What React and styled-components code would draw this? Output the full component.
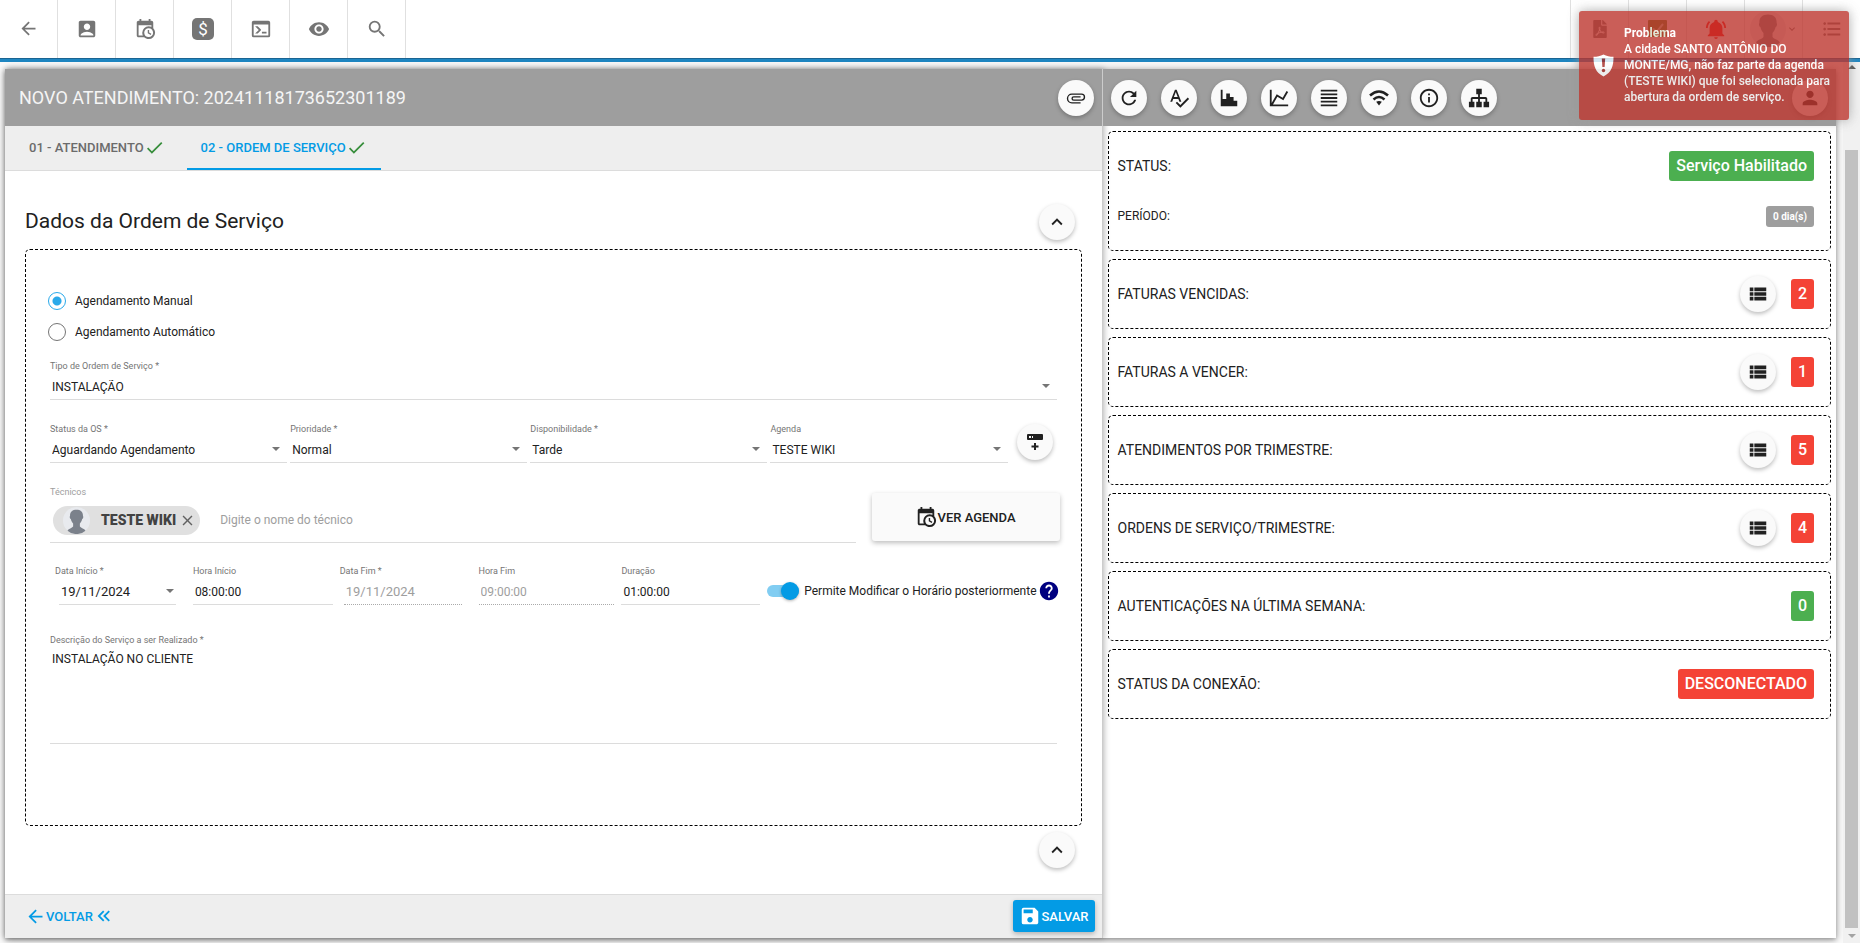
import React, { useState } from "react";
import styled, { createGlobalStyle } from "styled-components";
import {
  MdAccountBox,
  MdArrowBack,
  MdCheck,
  MdClose,
  MdFormatListBulleted,
  MdHelp,
  MdInfoOutline,
  MdKeyboardArrowDown,
  MdKeyboardArrowUp,
  MdPerson,
  MdRefresh,
  MdSave,
  MdSearch,
  MdSpellcheck,
  MdViewList,
  MdVisibility,
} from "react-icons/md";
import { FaFilePdf } from "react-icons/fa";

const GlobalStyle = createGlobalStyle`
  * {
    box-sizing: border-box;
  }
  body {
    margin: 0;
    background: #fafafa;
    color: #212121;
    font-family: Roboto, "Liberation Sans", sans-serif;
    font-size: 14px;
  }
  button, input, select, textarea {
    font-family: inherit;
    color: inherit;
  }
  button {
    border: none;
    padding: 0;
    cursor: pointer;
  }
  svg {
    display: block;
    flex: none;
  }
`;

const Page = styled.div`
  display: flex;
  flex-direction: column;
  height: 100vh;
  min-height: 900px;
`;

const Topbar = styled.header`
  display: flex;
  justify-content: space-between;
  height: 62px;
  flex: none;
  background: #fff;
  border-bottom: 3px solid #1f86c1;
  box-shadow: inset 0 -1px 0 #1b6492;
`;

const TopGroup = styled.nav`
  display: flex;
`;

const TopButton = styled.button`
  display: flex;
  align-items: center;
  justify-content: center;
  width: 58px;
  height: 58px;
  padding-bottom: 1px;
  background: none;
  color: ${({ $color }) => $color || "#757575"};
  border-right: ${({ $end }) => ($end ? "none" : "1px solid #e0e0e0")};
  border-left: ${({ $end }) => ($end ? "1px solid #e0e0e0" : "none")};
`;

const Body = styled.div`
  display: flex;
  flex: 1;
  min-height: 0;
`;

const Workspace = styled.main`
  display: flex;
  flex: 1;
  min-width: 0;
  margin: 7px 7px 5px 5px;
  background: #fff;
  box-shadow: 0 1px 8px rgba(0, 0, 0, 0.35), 0 2px 4px rgba(0, 0, 0, 0.2);
`;

const FormPanel = styled.section`
  display: flex;
  flex-direction: column;
  flex: 299 1 0;
  min-width: 0;
  border-right: 1px solid #ccc;
  box-shadow: 1px 0 6px rgba(0, 0, 0, 0.3);
`;

const SidePanel = styled.aside`
  flex: 200 1 0;
  min-width: 0;
`;

const PanelHeader = styled.div`
  display: flex;
  align-items: center;
  gap: 14px;
  height: 57px;
  padding: 0 8px;
  background: #9e9e9e;
`;

const Title = styled.h1`
  flex: 1;
  margin: 0;
  padding-left: 6px;
  font-size: 18px;
  font-weight: 400;
  color: #f5f5f5;
`;

const Spacer = styled.span`
  flex: 1;
`;

const RoundButton = styled.button`
  display: flex;
  align-items: center;
  justify-content: center;
  flex: none;
  width: 36px;
  height: 36px;
  border-radius: 50%;
  background: #fafafa;
  color: #212121;
  box-shadow: 0 2px 4px rgba(0, 0, 0, 0.26);
`;

const Tabs = styled.nav`
  display: flex;
  gap: 8px;
  height: 45px;
  padding: 0 10px;
  background: #eee;
  border-bottom: 1px solid #dcdcdc;
`;

const Tab = styled.button`
  display: flex;
  align-items: center;
  padding: 0 14px;
  background: none;
  font-size: 13px;
  font-weight: 500;
  color: ${({ $active }) => ($active ? "#039be5" : "#6b6b6b")};
  border-bottom: 2px solid ${({ $active }) => ($active ? "#039be5" : "transparent")};

  svg {
    color: #388e3c;
  }
`;

const Content = styled.div`
  flex: 1;
  min-height: 0;
  padding: 33px 20px 0;
`;

const SectionHead = styled.div`
  display: flex;
  align-items: center;
  justify-content: space-between;
  height: 36px;
  padding-right: 7px;
  margin-bottom: 9px;
`;

const SectionTitle = styled.h2`
  margin: 0;
  padding-bottom: 2px;
  font-size: 21px;
  font-weight: 400;
`;

const SectionFoot = styled.div`
  display: flex;
  justify-content: flex-end;
  padding: 6px 7px 0 0;
`;

const FormBox = styled.form`
  border: 1px dashed #000;
  border-radius: 5px;
  padding: 35px 24px 81px;
`;

const RadioLabel = styled.label`
  display: flex;
  align-items: center;
  gap: 9px;
  height: 31px;
  font-size: 12px;
`;

const Radio = styled.input`
  appearance: none;
  width: 18px;
  height: 18px;
  margin: 0 0 0 -2px;
  border: 1px solid #757575;
  border-radius: 50%;

  &:checked {
    border-color: #29a9ea;
    background: radial-gradient(circle, #29a9ea 4px, #fff 5px);
  }
`;

const Row = styled.div`
  display: flex;
  align-items: ${({ $align }) => $align || "flex-start"};
  gap: ${({ $gap }) => $gap || 0}px;
  margin-top: ${({ $top }) => $top || 0}px;
`;

const FieldWrap = styled.div`
  position: relative;
  flex: 1;
  min-width: 0;
`;

const DateCell = styled(FieldWrap)`
  padding-right: 7px;
`;

const FieldLabel = styled.label`
  display: block;
  height: 12px;
  line-height: 12px;
  font-size: 9px;
  color: ${({ $light }) => ($light ? "#9e9e9e" : "#757575")};
  white-space: nowrap;
`;

const Select = styled.select`
  appearance: none;
  display: block;
  width: 100%;
  height: 28px;
  padding: 2px 24px 0 2px;
  border: none;
  border-bottom: 1px solid #dcdcdc;
  border-radius: 0;
  background: transparent;
  font-size: 12px;
`;

const TextInput = styled.input`
  display: block;
  width: 100%;
  height: 28px;
  padding: 2px 2px 0;
  border: none;
  border-bottom: 1px solid #dcdcdc;
  background: transparent;
  font-size: 12px;

  &:disabled {
    color: #9e9e9e;
    border-bottom: 1px dotted #aaa;
  }
`;

const DateInput = styled(TextInput)`
  width: calc(100% - 14px);
  margin-left: 4px;
  font-size: 13px;
`;

const Caret = styled.span`
  position: absolute;
  right: ${({ $right }) => $right || 7}px;
  bottom: 12px;
  border: 4px solid transparent;
  border-top-color: #757575;
  border-bottom: none;
  pointer-events: none;
`;

const Textarea = styled.textarea`
  display: block;
  width: 100%;
  height: 98px;
  padding: 6px 2px;
  border: none;
  border-bottom: 1px solid #dcdcdc;
  background: transparent;
  font-size: 12px;
  resize: none;
`;

const AddWrap = styled.div`
  padding: 1px 4px 0 6px;
`;

const Technicians = styled.div`
  flex: 1;
  border-bottom: 1px solid #dcdcdc;
`;

const ChipLine = styled.div`
  display: flex;
  align-items: center;
  gap: 20px;
  height: 44px;
  padding-left: 3px;
`;

const Chip = styled.span`
  display: flex;
  align-items: center;
  height: 29px;
  padding: 0 4px 0 10px;
  border-radius: 15px;
  background: #e0e0e0;
  color: #424242;
  font-size: 14px;
  font-weight: 700;

  strong {
    margin: 0 3px 0 11px;
  }
`;

const ChipRemove = styled.button`
  background: none;
  color: #616161;
`;

const ChipInput = styled.input`
  flex: 1;
  border: none;
  padding: 0;
  background: none;
  font-size: 12px;

  &::placeholder {
    color: #9e9e9e;
  }
`;

const AgendaButton = styled.button`
  display: flex;
  align-items: center;
  justify-content: center;
  width: 188px;
  height: 48px;
  margin: 0 -3px 2px 0;
  border-radius: 3px;
  background: #fafafa;
  font-size: 13px;
  font-weight: 500;
  box-shadow: 0 2px 5px rgba(0, 0, 0, 0.26);
`;

const DateRow = styled.div`
  display: grid;
  grid-template-columns: 139fr 148fr 140fr 144fr 147fr auto;
  margin: 22px 0 0 5px;
`;

const SwitchLabel = styled.label`
  display: flex;
  align-items: center;
  gap: 5px;
  padding-top: 12px;
  margin-right: -3px;
  font-size: 12px;
  white-space: nowrap;

  svg {
    margin-left: -4px;
  }
`;

const Switch = styled.input`
  appearance: none;
  position: relative;
  width: 32px;
  height: 12px;
  margin: 0;
  border-radius: 6px;
  background: #81cdf2;

  &::after {
    content: "";
    position: absolute;
    top: -3px;
    right: 0;
    width: 18px;
    height: 18px;
    border-radius: 50%;
    background: #039be5;
    box-shadow: 0 1px 3px rgba(0, 0, 0, 0.3);
  }
`;

const Footer = styled.footer`
  display: flex;
  align-items: center;
  justify-content: space-between;
  height: 44px;
  padding: 0 7px 1px 20px;
  background: #eee;
  border-top: 1px solid #dcdcdc;
`;

const BackButton = styled.button`
  display: flex;
  align-items: center;
  background: none;
  color: #039be5;
  font-size: 13px;
  font-weight: 500;
`;

const SaveButton = styled(BackButton)`
  height: 32px;
  padding: 0 6px;
  border-radius: 3px;
  background: #039be5;
  color: #fff;
  box-shadow: 0 2px 5px rgba(0, 0, 0, 0.26);
`;

const Cards = styled.div`
  display: flex;
  flex-direction: column;
  gap: 8px;
  padding: 5px;
`;

const Card = styled.div`
  border: 1px dashed #000;
  border-radius: 5px;
  padding: 9px 16px 9px 9px;
`;

const CardLine = styled.div`
  display: flex;
  align-items: center;
  gap: 15px;
  height: 50px;
  font-size: ${({ $small }) => ($small ? 12 : 14)}px;
`;

const Badge = styled.span`
  padding: 0 7px;
  border-radius: 3px;
  background: ${({ $color }) => $color};
  color: #fff;
  font-size: ${({ $small }) => ($small ? 10 : 16)}px;
  line-height: ${({ $small }) => ($small ? 21 : 30)}px;
  font-weight: ${({ $small }) => ($small ? 700 : 500)};
`;

const Scrollbar = styled.div`
  display: flex;
  flex-direction: column;
  align-items: center;
  width: 17px;
  padding: 3px 0 5px;
  background: #f1f1f1;
`;

const ScrollArrow = styled.span`
  border: 4px solid transparent;
  border-top: ${({ $up }) => ($up ? "none" : "4px solid #a3a3a3")};
  border-bottom: ${({ $up }) => ($up ? "4px solid #505050" : "none")};
`;

const ScrollThumb = styled.span`
  flex: 1;
  width: 13px;
  margin: 81px 0 6px;
  background: #c1c1c1;
`;

const Toast = styled.div`
  position: fixed;
  top: 11px;
  right: 11px;
  z-index: 10;
  display: flex;
  align-items: center;
  gap: 10px;
  width: 270px;
  padding: 14px 16px 15px 14px;
  border-radius: 3px;
  background: #bd362f;
  color: #fff;
  font-size: 12px;
  font-weight: 500;
  line-height: 16px;
  opacity: 0.8;
  box-shadow: 0 0 12px #999;

  p {
    margin: 0;
  }
`;

const PathIcon = ({ d, size = 22 }) => (
  <svg width={size} height={size} viewBox="0 0 24 24" fill="currentColor">
    <path d={d} />
  </svg>
);

const attachment =
  "M7.5,18A5.5,5.5 0 0,1 2,12.5A5.5,5.5 0 0,1 7.5,7H18A4,4 0 0,1 22,11A4,4 0 0,1 18,15H9.5A2.5,2.5 0 0,1 7,12.5A2.5,2.5 0 0,1 9.5,10H17V11.5H9.5A1,1 0 0,0 8.5,12.5A1,1 0 0,0 9.5,13.5H18A2.5,2.5 0 0,0 20.5,11A2.5,2.5 0 0,0 18,8.5H7.5A4,4 0 0,0 3.5,12.5A4,4 0 0,0 7.5,16.5H17V18H7.5Z";
const calendarClock =
  "M15,13H16.5V15.82L18.94,17.23L18.19,18.53L15,16.69V13M19,8H5V19H9.67C9.24,18.09 9,17.07 9,16A7,7 0 0,1 16,9C17.07,9 18.09,9.24 19,9.67V8M5,21C3.89,21 3,20.1 3,19V5C3,3.89 3.89,3 5,3H6V1H8V3H16V1H18V3H19A2,2 0 0,1 21,5V11.1C22.24,12.36 23,14.09 23,16A7,7 0 0,1 16,23C14.09,23 12.36,22.24 11.1,21H5M16,11.15A4.85,4.85 0 0,0 11.15,16C11.15,18.68 13.32,20.85 16,20.85A4.85,4.85 0 0,0 20.85,16C20.85,13.32 18.68,11.15 16,11.15Z";
const consoleIcon =
  "M20,19V7H4V19H20M20,3A2,2 0 0,1 22,5V19A2,2 0 0,1 20,21H4A2,2 0 0,1 2,19V5C2,3.89 2.9,3 4,3H20M13,17V15H18V17H13M9.58,13L5.57,9H8.4L11.7,12.3C12.09,12.69 12.09,13.33 11.7,13.72L8.42,17H5.59L9.58,13Z";
const histogram = "M3,3H5V13H9V7H13V11H17V15H21V21H3V3Z";
const chartLine =
  "M16,11.78L20.24,4.45L21.97,5.45L16.74,14.5L10.23,10.75L5.46,19H22V21H2V3H4V17.54L9.5,8L16,11.78Z";
const justify =
  "M3,3H21V5H3V3M3,7H21V9H3V7M3,11H21V13H3V11M3,15H21V17H3V15M3,19H21V21H3V19Z";
const sitemap =
  "M9,2V8H11V11H5C3.89,11 3,11.89 3,13V16H1V22H7V16H5V13H11V16H9V22H15V16H13V13H19V16H17V22H23V16H21V13C21,11.89 20.11,11 19,11H13V8H15V2H9Z";
const bellRing =
  "M21,19V20H3V19L5,17V11C5,7.9 7.03,5.17 10,4.29C10,4.19 10,4.1 10,4A2,2 0 0,1 12,2A2,2 0 0,1 14,4C14,4.1 14,4.19 14,4.29C16.97,5.17 19,7.9 19,11V17L21,19M14,21A2,2 0 0,1 12,23A2,2 0 0,1 10,21M19.75,3.19L18.33,4.61C20.04,6.3 21,8.6 21,11H23C23,8.07 21.84,5.25 19.75,3.19M1,11H3C3,8.6 3.96,6.3 5.67,4.61L4.25,3.19C2.16,5.25 1,8.07 1,11Z";
const doubleLeft =
  "M18.41,7.41L17,6L11,12L17,18L18.41,16.59L13.83,12L18.41,7.41M12.41,7.41L11,6L5,12L11,18L12.41,16.59L7.83,12L12.41,7.41Z";

const DollarIcon = () => (
  <svg width="22" height="22" viewBox="0 0 22 22">
    <rect width="22" height="22" rx="5" fill="#757575" />
    <text x="11" y="17" fontSize="17" fill="#fff" textAnchor="middle">
      $
    </text>
  </svg>
);

const WifiIcon = () => (
  <svg width="20" height="20" viewBox="0 0 20 20" fill="none" stroke="currentColor">
    <path d="M1 7.5Q10 -0.5 19 7.5" strokeWidth="2.6" />
    <path d="M4.5 11.5Q10 6.5 15.5 11.5" strokeWidth="2.4" />
    <path d="M10 17.5L7.2 13.8Q10 12 12.8 13.8Z" fill="currentColor" stroke="none" />
  </svg>
);

const ServerPlusIcon = () => (
  <svg width="18" height="18" viewBox="0 0 18 18">
    <rect x="1" y="1" width="16" height="6" rx="1" fill="#212121" />
    <path d="M3 3H5V5H3ZM6 3H7V5H6Z" fill="#fafafa" />
    <path d="M9 10V17M5.5 13.5H12.5" stroke="#212121" strokeWidth="2" />
  </svg>
);

const Avatar = ({ size }) => (
  <svg width={size} height={size} viewBox="0 0 36 36">
    <circle cx="18" cy="18" r="18" fill="#e8eaee" />
    <path
      d="M18 3.5C12.5 3.5 9 6.5 9.4 12C8.6 12.5 9 15.5 10.4 16C11 19 12.5 21 13.5 22V26C12 28.5 7.5 28.5 6 31.5A18 18 0 0 0 30 31.5C28.5 28.5 24 28.5 22.5 26V22C23.5 21 25 19 25.6 16C27 15.5 27.4 12.5 26.6 12C27 6.5 23.5 3.5 18 3.5Z"
      fill="#7b818b"
    />
  </svg>
);

const ShieldIcon = () => (
  <svg width="21" height="23" viewBox="0 0 21 23">
    <path
      d="M10.5 0.5C7.5 2.2 4 2.8 0.5 2.8C0.4 12 2.5 18.5 10.5 22.5C18.5 18.5 20.6 12 20.5 2.8C17 2.8 13.5 2.2 10.5 0.5Z"
      fill="#fff"
    />
    <path d="M8.8 4.5H12.2L11.6 13H9.4Z" fill="#a52a24" />
    <circle cx="10.5" cy="16.5" r="1.7" fill="#a52a24" />
  </svg>
);

const TaskIcon = () => (
  <svg width="19" height="17" viewBox="0 0 19 17">
    <rect width="19" height="17" rx="1" fill="#5f7d1f" />
    <path d="M5 8.5L8.5 12L15 4" stroke="#b9d3a0" strokeWidth="2" fill="none" />
  </svg>
);

const SelectField = ({ id, label, value }) => (
  <FieldWrap>
    <FieldLabel htmlFor={id}>{label}</FieldLabel>
    <Select id={id} defaultValue={value}>
      <option>{value}</option>
    </Select>
    <Caret />
  </FieldWrap>
);

const topItems = [
  { name: "Voltar", icon: <MdArrowBack size={21} /> },
  { name: "Clientes", icon: <MdAccountBox size={22} /> },
  { name: "Agenda", icon: <PathIcon d={calendarClock} /> },
  { name: "Financeiro", icon: <DollarIcon /> },
  { name: "Console", icon: <PathIcon d={consoleIcon} /> },
  { name: "Visualizar", icon: <MdVisibility size={22} /> },
  { name: "Pesquisar", icon: <MdSearch size={22} /> },
];

const sideTools = [
  { name: "Atualizar", icon: <MdRefresh size={22} /> },
  { name: "Corrigir", icon: <MdSpellcheck size={22} /> },
  { name: "Histograma", icon: <PathIcon d={histogram} /> },
  { name: "Consumo", icon: <PathIcon d={chartLine} /> },
  { name: "Registros", icon: <PathIcon d={justify} /> },
  { name: "Conexão", icon: <WifiIcon /> },
  { name: "Informações", icon: <MdInfoOutline size={22} /> },
  { name: "Rede", icon: <PathIcon d={sitemap} /> },
];

const red = "#f44336";
const green = "#4caf50";

const sideCards = [
  { label: "FATURAS VENCIDAS:", value: "2", color: red, list: true },
  { label: "FATURAS A VENCER:", value: "1", color: red, list: true },
  { label: "ATENDIMENTOS POR TRIMESTRE:", value: "5", color: red, list: true },
  { label: "ORDENS DE SERVIÇO/TRIMESTRE:", value: "4", color: red, list: true },
  { label: "AUTENTICAÇÕES NA ÚLTIMA SEMANA:", value: "0", color: green },
  { label: "STATUS DA CONEXÃO:", value: "DESCONECTADO", color: red },
];

const OrderForm = () => {
  const [mode, setMode] = useState("manual");

  return (
    <FormBox>
      <RadioLabel>
        <Radio type="radio" name="modo" checked={mode === "manual"} onChange={() => setMode("manual")} />
        Agendamento Manual
      </RadioLabel>
      <RadioLabel>
        <Radio type="radio" name="modo" checked={mode === "auto"} onChange={() => setMode("auto")} />
        Agendamento Automático
      </RadioLabel>

      <Row $top={13}>
        <SelectField id="tipo" label="Tipo de Ordem de Serviço *" value="INSTALAÇÃO" />
      </Row>

      <Row $top={23} $gap={3}>
        <SelectField id="status" label="Status da OS *" value="Aguardando Agendamento" />
        <SelectField id="prioridade" label="Prioridade *" value="Normal" />
        <SelectField id="disponibilidade" label="Disponibilidade *" value="Tarde" />
        <SelectField id="agenda" label="Agenda" value="TESTE WIKI" />
        <AddWrap>
          <RoundButton type="button" aria-label="Adicionar">
            <ServerPlusIcon />
          </RoundButton>
        </AddWrap>
      </Row>

      <Row $top={23} $gap={16} $align="flex-end">
        <Technicians>
          <FieldLabel htmlFor="tecnicos" $light>
            Técnicos
          </FieldLabel>
          <ChipLine>
            <Chip>
              <Avatar size={27} />
              <strong>TESTE WIKI</strong>
              <ChipRemove type="button" aria-label="Remover">
                <MdClose size={17} />
              </ChipRemove>
            </Chip>
            <ChipInput id="tecnicos" placeholder="Digite o nome do técnico" />
          </ChipLine>
        </Technicians>
        <AgendaButton type="button">
          <PathIcon d={calendarClock} />
          VER AGENDA
        </AgendaButton>
      </Row>

      <DateRow>
        <DateCell>
          <FieldLabel htmlFor="dataInicio">Data Início *</FieldLabel>
          <DateInput id="dataInicio" defaultValue="19/11/2024" />
          <Caret $right={19} />
        </DateCell>
        <DateCell>
          <FieldLabel htmlFor="horaInicio">Hora Início</FieldLabel>
          <TextInput id="horaInicio" defaultValue="08:00:00" />
        </DateCell>
        <DateCell>
          <FieldLabel htmlFor="dataFim">Data Fim *</FieldLabel>
          <DateInput id="dataFim" defaultValue="19/11/2024" disabled />
        </DateCell>
        <DateCell>
          <FieldLabel htmlFor="horaFim">Hora Fim</FieldLabel>
          <TextInput id="horaFim" defaultValue="09:00:00" disabled />
        </DateCell>
        <DateCell>
          <FieldLabel htmlFor="duracao">Duração</FieldLabel>
          <TextInput id="duracao" defaultValue="01:00:00" />
        </DateCell>
        <SwitchLabel>
          <Switch type="checkbox" defaultChecked />
          Permite Modificar o Horário posteriormente
          <MdHelp size={22} color="#000080" />
        </SwitchLabel>
      </DateRow>

      <Row $top={29}>
        <FieldWrap>
          <FieldLabel htmlFor="descricao">Descrição do Serviço a ser Realizado *</FieldLabel>
          <Textarea id="descricao" defaultValue="INSTALAÇÃO NO CLIENTE" />
        </FieldWrap>
      </Row>
    </FormBox>
  );
};

const App = () => {
  return (
    <>
      <GlobalStyle />
      <Page>
        <Topbar>
          <TopGroup>
            {topItems.map((item) => (
              <TopButton key={item.name} aria-label={item.name}>
                {item.icon}
              </TopButton>
            ))}
          </TopGroup>
          <TopGroup>
            <TopButton $end aria-label="PDF">
              <FaFilePdf size={18} />
            </TopButton>
            <TopButton $end aria-label="Tarefas">
              <TaskIcon />
            </TopButton>
            <TopButton $end $color="#f00" aria-label="Alertas">
              <PathIcon d={bellRing} />
            </TopButton>
            <TopButton $end aria-label="Perfil">
              <Avatar size={36} />
              <MdKeyboardArrowDown size={12} />
            </TopButton>
            <TopButton $end aria-label="Menu">
              <MdFormatListBulleted size={22} />
            </TopButton>
          </TopGroup>
        </Topbar>

        <Body>
          <Workspace>
            <FormPanel>
              <PanelHeader>
                <Title>NOVO ATENDIMENTO: 20241118173652301189</Title>
                <RoundButton aria-label="Anexos">
                  <PathIcon d={attachment} />
                </RoundButton>
              </PanelHeader>
              <Tabs>
                <Tab>
                  01 - ATENDIMENTO
                  <MdCheck size={21} />
                </Tab>
                <Tab $active>
                  02 - ORDEM DE SERVIÇO
                  <MdCheck size={21} />
                </Tab>
              </Tabs>
              <Content>
                <SectionHead>
                  <SectionTitle>Dados da Ordem de Serviço</SectionTitle>
                  <RoundButton aria-label="Recolher">
                    <MdKeyboardArrowUp size={22} />
                  </RoundButton>
                </SectionHead>
                <OrderForm />
                <SectionFoot>
                  <RoundButton aria-label="Recolher seção">
                    <MdKeyboardArrowUp size={22} />
                  </RoundButton>
                </SectionFoot>
              </Content>
              <Footer>
                <BackButton>
                  <MdArrowBack size={21} />
                  VOLTAR
                  <PathIcon d={doubleLeft} size={22} />
                </BackButton>
                <SaveButton>
                  <MdSave size={22} />
                  SALVAR
                </SaveButton>
              </Footer>
            </FormPanel>

            <SidePanel>
              <PanelHeader>
                {sideTools.map((tool) => (
                  <RoundButton key={tool.name} aria-label={tool.name}>
                    {tool.icon}
                  </RoundButton>
                ))}
                <Spacer />
                <RoundButton aria-label="Cliente">
                  <MdPerson size={22} />
                </RoundButton>
              </PanelHeader>
              <Cards>
                <Card>
                  <CardLine>
                    STATUS:
                    <Spacer />
                    <Badge $color={green}>Serviço Habilitado</Badge>
                  </CardLine>
                  <CardLine $small>
                    PERÍODO:
                    <Spacer />
                    <Badge $small $color="#9e9e9e">
                      0 dia(s)
                    </Badge>
                  </CardLine>
                </Card>
                {sideCards.map((card) => (
                  <Card key={card.label}>
                    <CardLine>
                      {card.label}
                      <Spacer />
                      {card.list && (
                        <RoundButton aria-label="Listar">
                          <MdViewList size={22} />
                        </RoundButton>
                      )}
                      <Badge $color={card.color}>{card.value}</Badge>
                    </CardLine>
                  </Card>
                ))}
              </Cards>
            </SidePanel>
          </Workspace>
          <Scrollbar>
            <ScrollArrow $up />
            <ScrollThumb />
            <ScrollArrow />
          </Scrollbar>
        </Body>

        <Toast role="alert">
          <ShieldIcon />
          <div>
            <strong>Problema</strong>
            <p>
              A cidade SANTO ANTÔNIO DO MONTE/MG, não faz parte da agenda (TESTE WIKI) que foi
              selecionada para abertura da ordem de serviço.
            </p>
          </div>
        </Toast>
      </Page>
    </>
  );
};

export default App;
